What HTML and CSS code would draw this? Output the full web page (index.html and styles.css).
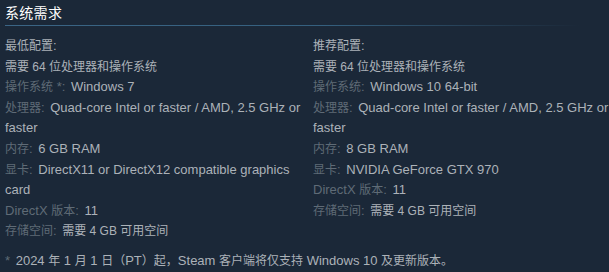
FILE: index.html
```html
<!DOCTYPE html>
<html lang="zh-CN">
<head>
<meta charset="utf-8">
<link rel="stylesheet" href="styles.css">
</head>
<body>
<div class="sysreq">
  <h2 class="title">系统需求</h2>
  <div class="cols">
    <div class="col">
      <div class="row"><span class="c">最低配置</span>:</div>
      <div class="row"><span class="c">需要 64 位处理器和操作系统</span></div>
      <div class="row"><span class="lbl"><span class="c">操作系统</span> *:</span> Windows 7</div>
      <div class="row"><span class="lbl"><span class="c">处理器</span>:</span> Quad-core Intel or faster / AMD, 2.5 GHz or faster</div>
      <div class="row"><span class="lbl"><span class="c">内存</span>:</span> 6 GB RAM</div>
      <div class="row"><span class="lbl"><span class="c">显卡</span>:</span> DirectX11 or DirectX12 compatible graphics card</div>
      <div class="row"><span class="lbl">DirectX <span class="c">版本</span>:</span> 11</div>
      <div class="row"><span class="lbl"><span class="c">存储空间</span>:</span> <span class="c">需要 4 GB 可用空间</span></div>
    </div>
    <div class="col">
      <div class="row"><span class="c">推荐配置</span>:</div>
      <div class="row"><span class="c">需要 64 位处理器和操作系统</span></div>
      <div class="row"><span class="lbl"><span class="c">操作系统</span>:</span> Windows 10 64-bit</div>
      <div class="row"><span class="lbl"><span class="c">处理器</span>:</span> Quad-core Intel or faster / AMD, 2.5 GHz or faster</div>
      <div class="row"><span class="lbl"><span class="c">内存</span>:</span> 8 GB RAM</div>
      <div class="row"><span class="lbl"><span class="c">显卡</span>:</span> NVIDIA GeForce GTX 970</div>
      <div class="row"><span class="lbl">DirectX <span class="c">版本</span>:</span> 11</div>
      <div class="row"><span class="lbl"><span class="c">存储空间</span>:</span> <span class="c">需要 4 GB 可用空间</span></div>
    </div>
  </div>
  <div class="note"><span class="lbl">*</span> 2024 <span class="c">年</span> 1 <span class="c">月</span> 1 <span class="c">日（</span>PT<span class="c">）起，</span>Steam <span class="c">客户端将仅支持</span> Windows 10 <span class="c">及更新版本。</span></div>
</div>
</body>
</html>
```

FILE: styles.css
```css
html, body {
  margin: 0;
  padding: 0;
  background: #1b2838;
}
body {
  font-family: "Liberation Sans", Arial, "Noto Sans CJK SC", sans-serif;
  font-size: 13px;
  color: #acb2b8;
}
.sysreq {
  padding: 0 0 0 5px;
}
.title {
  margin: 0;
  font-size: 14px;
  font-weight: normal;
  color: #ffffff;
  letter-spacing: 0.3px;
  line-height: 18px;
  padding: 4px 0 0 0;
}
.title::after {
  content: "";
  display: block;
  height: 1px;
  margin-top: 3px;
  width: 575px;
  background: linear-gradient(to right, #3b6585 0%, #35607f 55%, #1b2838 100%);
}
.c {
  font-size: 12px;
}
.cols {
  display: grid;
  grid-template-columns: 300px 296px;
  column-gap: 8px;
  margin-top: 10px;
  line-height: 20.6px;
}
.lbl {
  color: #5f6b76;
  margin-right: 2px;
}
.note {
  margin-top: 9px;
  line-height: 20px;
}
```
